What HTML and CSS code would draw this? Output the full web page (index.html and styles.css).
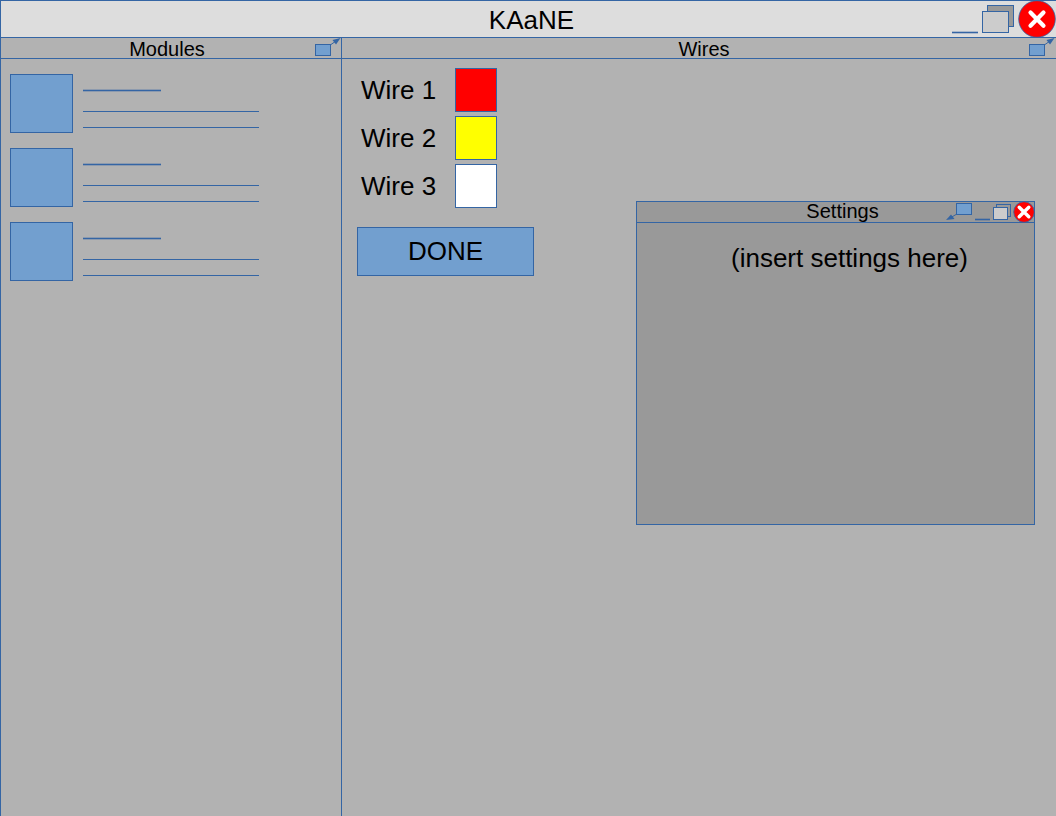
FILE: index.html
```html
<!DOCTYPE html>
<html lang="en">
<head>
  <meta charset="UTF-8" />
  <meta name="viewport" content="width=device-width, initial-scale=1.0"/>
  <title>KAaNE</title>
  <link rel="stylesheet" href="styles.css">
</head>
<body>

  <header class="title-bar">
    <h1>KAaNE</h1>
    <div class="controls">
      <button type="button" aria-label="Minimize">
        <svg width="28" height="36" viewBox="0 0 28 36">
          <path class="line" d="M2 31.5H28"/>
          <path class="glow" d="M2 31.5H28"/>
        </svg>
      </button>
      <button type="button" aria-label="Restore">
        <svg width="34" height="36" viewBox="0 0 34 36">
          <rect class="back" x="6.5" y="4.5" width="26" height="21"/>
          <rect class="front" x="1.5" y="10.5" width="26" height="21"/>
        </svg>
      </button>
      <button type="button" aria-label="Close">
        <svg width="38" height="36" viewBox="0 0 38 36">
          <circle class="close" cx="19" cy="18" r="18.3"/>
          <path class="cross" stroke-width="4.2" d="M12.5 11.5L25.5 24.8M25.5 11.5L12.5 24.8"/>
        </svg>
      </button>
    </div>
  </header>

  <main class="workspace">
    <section class="pane modules">
      <div class="pane-bar">
        <h2>Modules</h2>
        <div class="controls">
          <button type="button" aria-label="Pop out Modules">
            <svg width="27" height="20" viewBox="0 0 27 20">
              <rect class="box" x="1.5" y="6.5" width="15" height="11"/>
              <path class="line" d="M17 6.5L22 3"/>
              <path class="tip" d="M26.5 0L18.5 2L22 6.5Z"/>
            </svg>
          </button>
        </div>
      </div>
      <ul class="module-list">
        <li class="module">
          <div class="thumb"></div>
          <div class="lines"><span class="short"></span><span></span><span></span></div>
        </li>
        <li class="module">
          <div class="thumb"></div>
          <div class="lines"><span class="short"></span><span></span><span></span></div>
        </li>
        <li class="module">
          <div class="thumb"></div>
          <div class="lines"><span class="short"></span><span></span><span></span></div>
        </li>
      </ul>
    </section>

    <section class="pane wires">
      <div class="pane-bar">
        <h2>Wires</h2>
        <div class="controls">
          <button type="button" aria-label="Pop out Wires">
            <svg width="27" height="20" viewBox="0 0 27 20">
              <rect class="box" x="0.5" y="6.5" width="15" height="11"/>
              <path class="line" d="M16 6.5L21 3"/>
              <path class="tip" d="M25.5 0L17.5 2L21 6.5Z"/>
            </svg>
          </button>
        </div>
      </div>
      <form class="wire-form">
        <div class="wire">
          <label for="wire1">Wire 1</label>
          <input type="color" id="wire1" value="#ff0000" />
        </div>
        <div class="wire">
          <label for="wire2">Wire 2</label>
          <input type="color" id="wire2" value="#ffff00" />
        </div>
        <div class="wire">
          <label for="wire3">Wire 3</label>
          <input type="color" id="wire3" value="#ffffff" />
        </div>
        <button type="button" class="done">DONE</button>
      </form>
    </section>
  </main>

  <section class="settings">
    <div class="pane-bar">
      <h2>Settings</h2>
      <div class="controls">
        <button type="button" aria-label="Dock Settings">
          <svg width="26" height="20" viewBox="0 0 26 20">
            <rect class="box" x="10.5" y="1.5" width="15" height="11"/>
            <path class="line" d="M10 12.5L5 15.5"/>
            <path class="tip" d="M0 18L5 12.5L8.5 17Z"/>
          </svg>
        </button>
        <button type="button" aria-label="Minimize Settings">
          <svg width="16" height="20" viewBox="0 0 16 20">
            <path class="line" d="M1 17.5H16"/>
            <path class="glow" d="M1 17.5H16"/>
          </svg>
        </button>
        <button type="button" aria-label="Restore Settings">
          <svg width="19" height="20" viewBox="0 0 19 20">
            <rect class="back" x="4.5" y="2.5" width="14" height="12"/>
            <rect class="front" x="1.5" y="5.5" width="14" height="12"/>
          </svg>
        </button>
        <button type="button" aria-label="Close Settings">
          <svg width="21" height="20" viewBox="0 0 21 20">
            <circle class="close" cx="11" cy="10" r="10.3"/>
            <path class="cross" stroke-width="3.4" d="M6.2 5.2L15.8 14.8M15.8 5.2L6.2 14.8"/>
          </svg>
        </button>
      </div>
    </div>
    <p>(insert settings here)</p>
  </section>

</body>
</html>
```
FILE: styles.css
```css
* {
  box-sizing: border-box;
}

body {
  display: flex;
  flex-direction: column;
  position: relative;
  min-height: 100vh;
  margin: 0;
  border-top: 1px solid #3465a4;
  border-left: 1px solid #3465a4;
  background: #b2b2b2;
  color: #000;
  font-family: "Liberation Sans", Arial, sans-serif;
  font-size: 26px;
}

h1, h2, p, ul {
  margin: 0;
  padding: 0;
  font-weight: normal;
}

button {
  padding: 0;
  border: none;
  background: none;
  color: inherit;
  font: inherit;
  cursor: pointer;
}

/* title bars */
.title-bar, .pane-bar {
  display: grid;
  grid-template-columns: 1fr auto 1fr;
  align-items: center;
  border-bottom: 1px solid #3465a4;
}

.title-bar {
  padding-left: 6px;
  background: #ddd;
}

.title-bar h1 {
  padding-top: 2px;
  font-size: 26px;
  line-height: 34px;
}

.pane-bar h2 {
  font-size: 20px;
  line-height: 18px;
}

.pane h2 {
  padding-top: 2px;
}

.title-bar h1, .pane-bar h2 {
  grid-column: 2;
}

.controls {
  display: flex;
  justify-content: flex-end;
  gap: 2px;
}

.title-bar .controls {
  gap: 3px;
}

svg {
  display: block;
  overflow: visible;
}

.line {
  fill: none;
  stroke: #3465a4;
}

.glow {
  fill: none;
  stroke: #3465a4;
  stroke-width: 3;
  stroke-opacity: 0.3;
}

.tip {
  fill: #3465a4;
}

.box {
  fill: #729fcf;
  stroke: #3465a4;
}

.back {
  fill: #999;
  stroke: #3465a4;
}

.front {
  fill: #ccc;
  stroke: #3465a4;
}

.close {
  fill: #f00;
  stroke: #3465a4;
  stroke-width: 0.8;
}

.cross {
  stroke: #fff;
  stroke-linecap: round;
}

/* panes */
.workspace {
  display: flex;
  flex: 1;
}

.modules {
  width: 341px;
  border-right: 1px solid #3465a4;
}

.modules h2 {
  padding-right: 8px;
}

.wires {
  flex: 1;
}

.wires h2 {
  padding-left: 10px;
}

.module-list {
  display: flex;
  flex-direction: column;
  gap: 15px;
  padding: 15px 9px;
  list-style: none;
}

.module {
  display: flex;
  gap: 10px;
}

.thumb {
  width: 63px;
  height: 59px;
  border: 1px solid #3465a4;
  background: #729fcf;
}

.lines {
  display: flex;
  flex-direction: column;
  gap: 15px;
  width: 176px;
  padding-top: 16px;
}

.lines span {
  height: 1px;
  background: #3465a4;
}

.lines .short {
  width: 78px;
  margin-bottom: 5px;
  box-shadow: 0 1px rgba(52,101,164,0.3), 0 -1px rgba(52,101,164,0.3);
}

.wire-form {
  display: flex;
  flex-direction: column;
  align-items: flex-start;
  gap: 4px;
  padding: 9px 15px;
}

.wire {
  display: flex;
  align-items: center;
  padding-left: 4px;
}

.wire label {
  width: 94px;
}

.wire input {
  width: 42px;
  height: 44px;
  padding: 0;
  border: 1px solid #3465a4;
  background: none;
  appearance: none;
}

.wire input::-webkit-color-swatch-wrapper {
  padding: 0;
}

.wire input::-webkit-color-swatch {
  border: none;
  border-radius: 0;
}

.done {
  width: 177px;
  height: 49px;
  margin-top: 15px;
  border: 1px solid #3465a4;
  background: #729fcf;
}

/* floating window */
.settings {
  position: absolute;
  top: 200px;
  right: 21px;
  width: 399px;
  min-height: 324px;
  border: 1px solid #3465a4;
  background: #999;
}

.settings h2 {
  padding-bottom: 2px;
  padding-left: 14px;
}

.settings p {
  padding: 20px 0 20px 28px;
  line-height: 30px;
  text-align: center;
}
```
